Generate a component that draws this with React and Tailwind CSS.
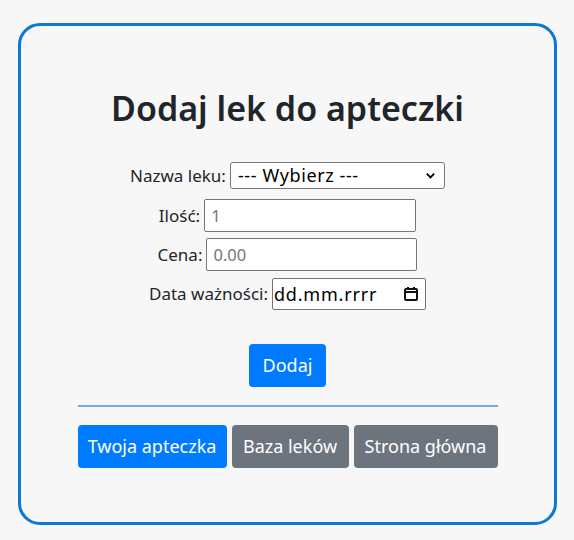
import React from 'react';

const font = { fontFamily: '"Noto Sans", "Open Sans", sans-serif' };

const Row = ({ label, children, className = '' }) => (
  <div className={`flex items-center justify-center gap-[4px] ${className}`}>
    <label className="text-[17px] text-[#212529]">{label}</label>
    {children}
  </div>
);

const App = () => {
  return (
    <div className="min-h-screen bg-[#f7f7f7] pt-[23px] pl-[18px]" style={font}>
      <div className="w-[539px] h-[502px] border-[3px] border-[#0b78d7] rounded-[22px] flex flex-col items-center">
        <h1 className="mt-[58px] text-[34px] leading-[48px] font-semibold text-[#212529]">Dodaj lek do apteczki</h1>

        <form className="mt-[30px] flex flex-col items-center w-[420px]">
          <Row label="Nazwa leku:">
            <div className="w-[215px] h-[27px] bg-white border border-[#767676] rounded-[3px] flex items-center justify-between pl-[7px] pr-[8px] text-[18px] tracking-[0.6px] text-black">
              <span>--- Wybierz ---</span>
              <svg width="11" height="11" viewBox="0 0 12 12" fill="none" stroke="#000" strokeWidth="2">
                <path d="M2 4l4 4 4-4" />
              </svg>
            </div>
          </Row>

          <Row label="Ilość:" className="mt-[10px]">
            <input
              type="text"
              placeholder="1"
              className="w-[212px] h-[33px] bg-white border border-[#767676] rounded-[2px] px-[6px] text-[16.5px] placeholder:text-[#757575] outline-none"
            />
          </Row>

          <Row label="Cena:" className="mt-[6px]">
            <input
              type="text"
              placeholder="0.00"
              className="w-[211px] h-[33px] bg-white border border-[#767676] rounded-[2px] px-[6px] text-[16.5px] placeholder:text-[#757575] outline-none"
            />
          </Row>

          <Row label="Data ważności:" className="mt-[7px]">
            <div className="w-[154px] h-[32px] bg-white border border-[#767676] rounded-[2px] flex items-center justify-between pl-[1px] pr-[6px] text-[18px] tracking-[0.8px] text-black">
              <span>dd.mm.rrrr</span>
              <svg width="16" height="16" viewBox="0 0 16 16" fill="none" stroke="#111" strokeWidth="2">
                <rect x="2" y="3" width="12" height="11" rx="1" />
                <path d="M2 6h12M5 1v3M11 1v3" />
              </svg>
            </div>
          </Row>

          <button
            type="button"
            className="mt-[34px] h-[43px] px-[14px] bg-[#007bff] text-white text-[18px] rounded-[4px]"
          >
            Dodaj
          </button>
        </form>

        <div className="mt-[18px] w-[420px] h-[2px] bg-[#7aa7dc]" />

        <div className="mt-[18px] flex gap-[5px]">
          <button type="button" className="h-[43px] w-[149px] bg-[#007bff] text-white text-[18px] rounded-[4px]">
            Twoja apteczka
          </button>
          <button type="button" className="h-[43px] w-[117px] bg-[#6c757d] text-white text-[18px] rounded-[4px]">
            Baza leków
          </button>
          <button type="button" className="h-[43px] w-[144px] bg-[#6c757d] text-white text-[18px] rounded-[4px]">
            Strona główna
          </button>
        </div>
      </div>
    </div>
  );
};

export default App;
